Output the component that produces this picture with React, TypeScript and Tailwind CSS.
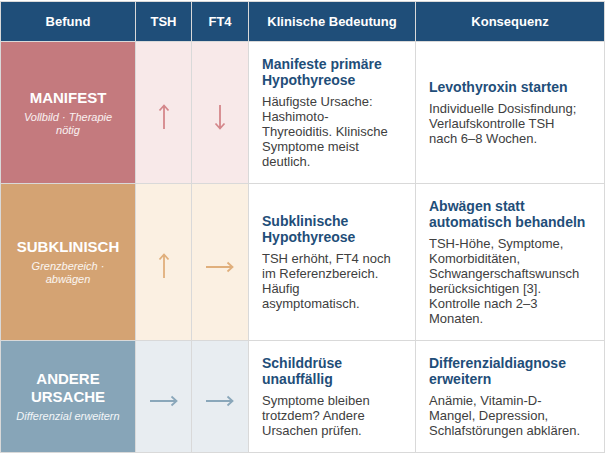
const rows = [
  {
    key: 'manifest',
    label: ['MANIFEST'],
    sub: 'Vollbild · Therapie nötig',
    labelBg: 'bg-[#c47a7e]',
    cellBg: 'bg-[#f8e9e9]',
    arrowColor: 'text-[#d4878b]',
    tsh: 'up',
    ft4: 'down',
    title: 'Manifeste primäre Hypothyreose',
    text: 'Häufigste Ursache: Hashimoto-Thyreoiditis. Klinische Symptome meist deutlich.',
    consTitle: 'Levothyroxin starten',
    consText: 'Individuelle Dosisfindung; Verlaufskontrolle TSH nach 6–8 Wochen.',
  },
  {
    key: 'sub',
    label: ['SUBKLINISCH'],
    sub: 'Grenzbereich · abwägen',
    labelBg: 'bg-[#d4a373]',
    cellBg: 'bg-[#fbf0e2]',
    arrowColor: 'text-[#e0af7c]',
    tsh: 'up',
    ft4: 'right',
    title: 'Subklinische Hypothyreose',
    text: 'TSH erhöht, FT4 noch im Referenzbereich. Häufig asymptomatisch.',
    consTitle: 'Abwägen statt automatisch behandeln',
    consText:
      'TSH-Höhe, Symptome, Komorbiditäten, Schwangerschaftswunsch berücksichtigen [3]. Kontrolle nach 2–3 Monaten.',
  },
  {
    key: 'andere',
    label: ['ANDERE', 'URSACHE'],
    sub: 'Differenzial erweitern',
    labelBg: 'bg-[#87a5b8]',
    cellBg: 'bg-[#e8edf1]',
    arrowColor: 'text-[#8aa7ba]',
    tsh: 'right',
    ft4: 'right',
    title: 'Schilddrüse unauffällig',
    text: 'Symptome bleiben trotzdem? Andere Ursachen prüfen.',
    consTitle: 'Differenzialdiagnose erweitern',
    consText: 'Anämie, Vitamin-D-Mangel, Depression, Schlafstörungen abklären.',
  },
];

// thin arrows like the ↑ ↓ → glyphs in the reference
function Arrow({ dir, color }: { dir: string; color: string }) {
  if (dir === 'right') {
    return (
      <svg width="28" height="12" viewBox="0 0 28 12" className={`inline-block translate-y-[4px] ${color}`}>
        <path d="M0 6H26.5M21.5 1.5L26.5 6L21.5 10.5" fill="none" stroke="currentColor" strokeWidth="1.8" />
      </svg>
    );
  }
  const d =
    dir === 'up'
      ? 'M6 25V1.5M1.5 6.5L6 1.5L10.5 6.5'
      : 'M6 1V24.5M1.5 19.5L6 24.5L10.5 19.5';
  return (
    <svg width="12" height="26" viewBox="0 0 12 26" className={`inline-block translate-y-[4px] ${color}`}>
      <path d={d} fill="none" stroke="currentColor" strokeWidth="1.8" />
    </svg>
  );
}

export default function App() {
  return (
    <div className="w-[606px] h-[456px] bg-white pt-px font-['Liberation_Sans',Arial,sans-serif]">
      <table className="table-fixed border-collapse w-[604px]">
        <colgroup>
          <col className="w-[135px]" />
          <col className="w-[56px]" />
          <col className="w-[57px]" />
          <col className="w-[167px]" />
          <col className="w-[189px]" />
        </colgroup>
        <thead>
          <tr className="bg-[#1f4e79] text-white text-[13px] font-bold h-[40px]">
            <th className="border border-[#d9d9d9]">Befund</th>
            <th className="border border-[#d9d9d9]">TSH</th>
            <th className="border border-[#d9d9d9]">FT4</th>
            <th className="border border-[#d9d9d9]">Klinische Bedeutung</th>
            <th className="border border-[#d9d9d9]">Konsequenz</th>
          </tr>
        </thead>
        <tbody>
          {rows.map((r) => (
            <tr key={r.key}>
              <td className={`border border-[#d9d9d9] ${r.labelBg} text-center align-middle px-3`}>
                <div className="text-white font-bold text-[15px] leading-[18px]">
                  {r.label.map((l) => (
                    <div key={l}>{l}</div>
                  ))}
                </div>
                <div className="mt-[4px] text-white/90 italic text-[11px] leading-[13px]">{r.sub}</div>
              </td>
              <td className={`border border-[#d9d9d9] ${r.cellBg} text-center align-middle`}>
                <Arrow dir={r.tsh} color={r.arrowColor} />
              </td>
              <td className={`border border-[#d9d9d9] ${r.cellBg} text-center align-middle`}>
                <Arrow dir={r.ft4} color={r.arrowColor} />
              </td>
              <td className="border border-[#d9d9d9] align-middle pl-[13px] pr-[18px] py-[14px]">
                <div className="text-[#1f4e79] font-bold text-[14px] leading-[16px]">{r.title}</div>
                <div className="mt-[6px] text-[#404040] text-[13px] leading-[15px]">{r.text}</div>
              </td>
              <td className="border border-[#d9d9d9] align-middle pl-[13px] pr-[18px] py-[14px]">
                <div className="text-[#1f4e79] font-bold text-[14px] leading-[16px]">{r.consTitle}</div>
                <div className="mt-[6px] text-[#404040] text-[13px] leading-[15px]">{r.consText}</div>
              </td>
            </tr>
          ))}
        </tbody>
      </table>
    </div>
  );
}
